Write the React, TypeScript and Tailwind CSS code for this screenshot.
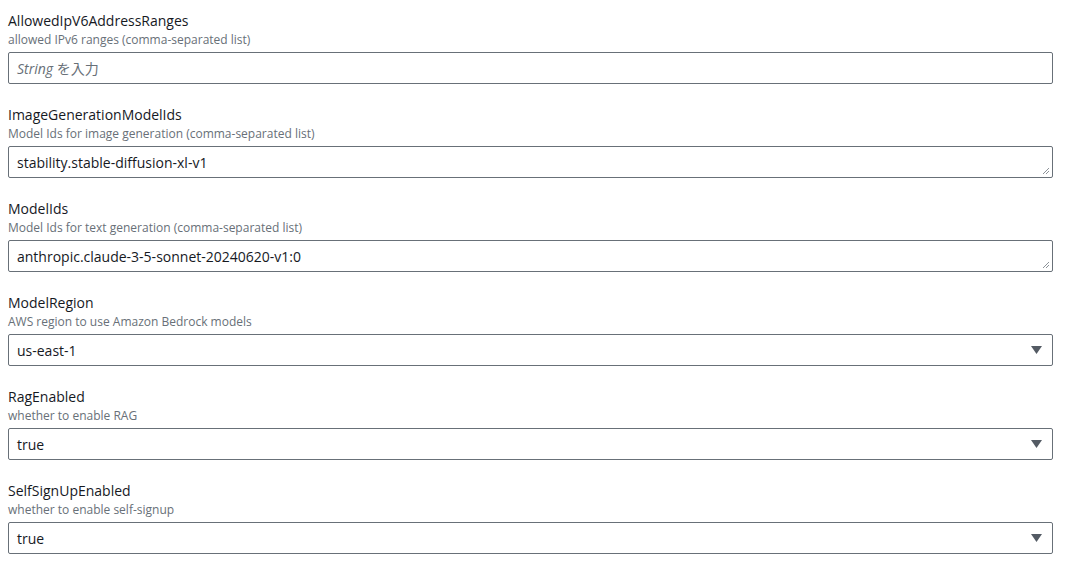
import React from 'react';

type Field = {
  name: string;
  desc: string;
  kind: 'input' | 'textarea' | 'select';
  value?: string;
  placeholder?: string;
};

const fields: Field[] = [
  { name: 'AllowedIpV6AddressRanges', desc: 'allowed IPv6 ranges (comma-separated list)', kind: 'input', placeholder: 'String を入力' },
  { name: 'ImageGenerationModelIds', desc: 'Model Ids for image generation (comma-separated list)', kind: 'textarea', value: 'stability.stable-diffusion-xl-v1' },
  { name: 'ModelIds', desc: 'Model Ids for text generation (comma-separated list)', kind: 'textarea', value: 'anthropic.claude-3-5-sonnet-20240620-v1:0' },
  { name: 'ModelRegion', desc: 'AWS region to use Amazon Bedrock models', kind: 'select', value: 'us-east-1' },
  { name: 'RagEnabled', desc: 'whether to enable RAG', kind: 'select', value: 'true' },
  { name: 'SelfSignUpEnabled', desc: 'whether to enable self-signup', kind: 'select', value: 'true' },
];

const ResizeHandle = () => (
  <svg className="absolute right-[2px] bottom-[2px]" width="8" height="8" viewBox="0 0 8 8">
    <path d="M7 1L1 7M7 4L4 7" stroke="#8d9399" strokeWidth="1" />
  </svg>
);

const FieldRow: React.FC<{ field: Field }> = ({ field }) => {
  return (
    <div className="flex flex-col">
      <div className="pt-[1px] text-[14px] leading-[20px] text-[#16191f]">{field.name}</div>
      <div className="mt-[1px] mb-[4px] text-[12px] leading-[16px] text-[#687078]">{field.desc}</div>
      <div className="relative h-[32px] border border-[#687078] rounded-[2px] bg-white flex items-center pl-[8px] pr-[10px]">
        {field.kind === 'input' ? (
          <span className="text-[14px] text-[#687078] italic">
            String<span className="not-italic"> を入力</span>
          </span>
        ) : (
          <span className="text-[14px] text-[#16191f]">{field.value}</span>
        )}
        {field.kind === 'textarea' && <ResizeHandle />}
        {field.kind === 'select' && (
          <svg className="ml-auto" width="11" height="8" viewBox="0 0 11 8">
            <path d="M0 0H11L5.5 8Z" fill="#545b64" />
          </svg>
        )}
      </div>
    </div>
  );
};

export default function App() {
  return (
    <div
      className="w-[1066px] h-[562px] bg-white pl-[8px] pr-[13px] pt-[10px] flex flex-col gap-[20px] overflow-hidden"
      style={{ fontFamily: '"Open Sans", "Noto Sans CJK JP", sans-serif' }}
    >
      {fields.map((f) => (
        <FieldRow key={f.name} field={f} />
      ))}
    </div>
  );
}
